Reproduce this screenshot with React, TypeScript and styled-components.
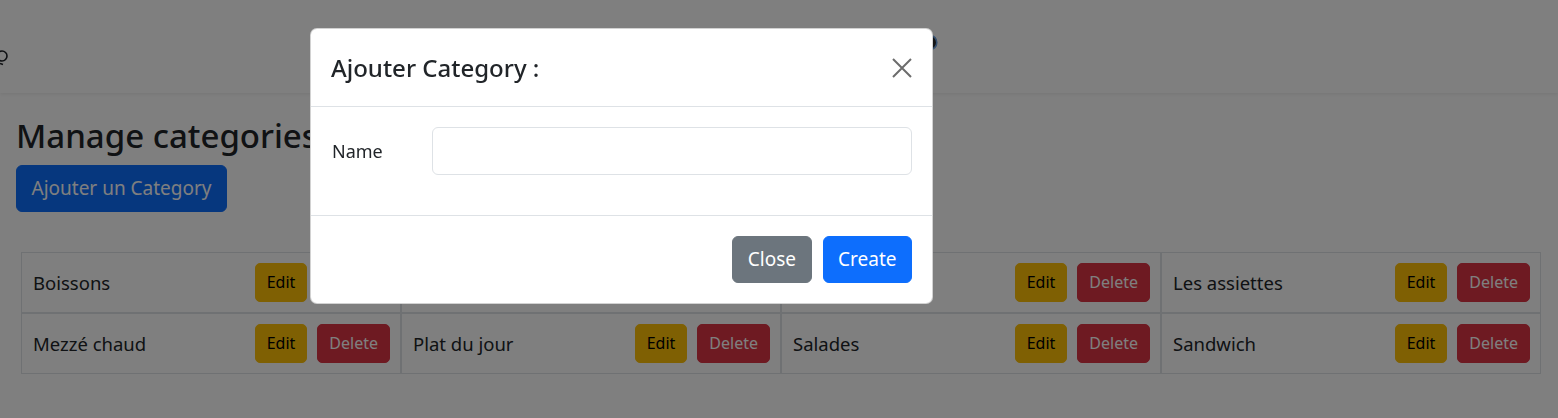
import React from "react";
import styled, { createGlobalStyle, css } from "styled-components";

const Global = createGlobalStyle`
  html, body { margin: 0; padding: 0; }
  body {
    font-family: "Noto Sans", "Segoe UI", "Liberation Sans", sans-serif;
    color: #212529;
    background: #ffffff;
    overflow: hidden;
  }
  * { box-sizing: border-box; }
`;

const Navbar = styled.nav`
  height: 93px;
  background: #ffffff;
  box-shadow: 0 2px 3px rgba(0, 0, 0, 0.06);
  display: flex;
  align-items: flex-start;
`;

const LogoMark = styled.svg`
  margin-top: 48px;
  width: 12px;
  height: 18px;
  flex: none;
`;

const Avatar = styled.svg`
  margin-top: 34px;
  margin-left: 909px;
  width: 17px;
  height: 17px;
  flex: none;
`;

const Main = styled.main`
  padding: 0 16px;
`;

const Title = styled.h2`
  margin: 24px 0 10px;
  font-size: 33px;
  line-height: 38px;
  font-weight: 500;
  letter-spacing: 0;
`;

type Variant = "primary" | "secondary" | "warning" | "danger";

const palette: Record<Variant, { bg: string; fg: string }> = {
  primary: { bg: "#0d6efd", fg: "#ffffff" },
  secondary: { bg: "#6c757d", fg: "#ffffff" },
  warning: { bg: "#ffc107", fg: "#000000" },
  danger: { bg: "#dc3545", fg: "#ffffff" },
};

const Button = styled.button<{ $variant: Variant; $large?: boolean }>`
  font-family: inherit;
  border: 1px solid ${(p) => palette[p.$variant].bg};
  background: ${(p) => palette[p.$variant].bg};
  color: ${(p) => palette[p.$variant].fg};
  cursor: pointer;
  white-space: nowrap;
  ${(p) =>
    p.$large
      ? css`
          font-size: 19px;
          line-height: 29px;
          padding: 8px 14.5px;
          border-radius: 6px;
        `
      : css`
          font-size: 16px;
          line-height: 25px;
          padding: 6px 11px;
          border-radius: 5px;
        `}
`;

const Grid = styled.div`
  margin: 40px 0 0 5px;
  display: grid;
  grid-template-columns: repeat(4, 380px);
`;

const Cell = styled.div`
  border: 1px solid #dee2e6;
  padding: 10px;
  display: flex;
  align-items: center;
  gap: 10px;
`;

const CellName = styled.span`
  flex: 1;
  padding-left: 1px;
  font-size: 18.5px;
  line-height: 28px;
`;

const Backdrop = styled.div`
  position: fixed;
  inset: 0;
  background: rgba(0, 0, 0, 0.5);
`;

const Dialog = styled.div`
  position: fixed;
  left: 310px;
  top: 28px;
  width: 623px;
  background: #ffffff;
  border: 1px solid rgba(0, 0, 0, 0.175);
  border-radius: 7px;
  display: flex;
  flex-direction: column;
`;

const DialogHeader = styled.div`
  height: 78px;
  padding: 0 20px;
  border-bottom: 1px solid #dee2e6;
  display: flex;
  align-items: center;
  justify-content: space-between;
`;

const DialogTitle = styled.h4`
  margin: 0;
  font-size: 24px;
  line-height: 30px;
  font-weight: 500;
`;

const CloseX = styled.button`
  border: 0;
  background: transparent;
  padding: 0;
  width: 20px;
  height: 20px;
  display: flex;
  cursor: pointer;
`;

const DialogBody = styled.div`
  padding: 20px 20px 40px;
`;

const FormRow = styled.div`
  display: flex;
  align-items: center;
`;

const Label = styled.label`
  width: 101px;
  flex: none;
  padding-left: 1px;
  font-size: 18px;
  line-height: 24px;
`;

const Input = styled.input`
  flex: 1;
  height: 48px;
  border: 1px solid #dee2e6;
  border-radius: 6px;
  padding: 0 16px;
  font-family: inherit;
  font-size: 18px;
  outline: none;
`;

const DialogFooter = styled.div`
  border-top: 1px solid #dee2e6;
  padding: 20px;
  display: flex;
  justify-content: flex-end;
  gap: 11px;
`;

const categories = [
  "Boissons",
  "",
  "",
  "Les assiettes",
  "Mezzé chaud",
  "Plat du jour",
  "Salades",
  "Sandwich",
];

export default function App() {
  return (
    <>
      <Global />
      <Navbar>
        <LogoMark viewBox="0 0 12 18">
          <circle cx="2" cy="8" r="5" fill="none" stroke="#1f2328" strokeWidth="1.6" />
          <path d="M0 15.5 L3 16.5" stroke="#1f2328" strokeWidth="1.6" />
        </LogoMark>
        <Avatar viewBox="0 0 17 17">
          <circle cx="8.5" cy="8.5" r="7.3" fill="#2b2b2b" stroke="#6aa0e0" strokeWidth="1.6" />
          <circle cx="8.5" cy="6.5" r="2.6" fill="#e9a15a" />
        </Avatar>
      </Navbar>
      <Main>
        <Title>Manage categories</Title>
        <Button $variant="primary" $large>
          Ajouter un Category
        </Button>
        <Grid>
          {categories.map((name, i) => (
            <Cell key={i}>
              <CellName>{name}</CellName>
              <Button $variant="warning">Edit</Button>
              <Button $variant="danger">Delete</Button>
            </Cell>
          ))}
        </Grid>
      </Main>
      <Backdrop />
      <Dialog>
        <DialogHeader>
          <DialogTitle>Ajouter Category :</DialogTitle>
          <CloseX aria-label="Close">
            <svg width="20" height="20" viewBox="0 0 20 20">
              <path d="M1 1 L19 19 M19 1 L1 19" stroke="#6c6c6c" strokeWidth="2" />
            </svg>
          </CloseX>
        </DialogHeader>
        <DialogBody>
          <FormRow>
            <Label>Name</Label>
            <Input type="text" />
          </FormRow>
        </DialogBody>
        <DialogFooter>
          <Button $variant="secondary" $large>
            Close
          </Button>
          <Button $variant="primary" $large>
            Create
          </Button>
        </DialogFooter>
      </Dialog>
    </>
  );
}
